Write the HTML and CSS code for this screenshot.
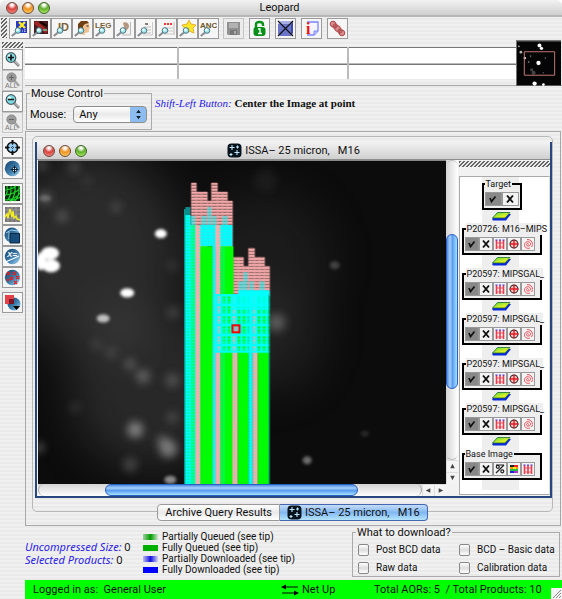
FILE: index.html
```html
<!DOCTYPE html>
<html lang="en">
<head>
<meta charset="utf-8">
<title>Leopard</title>
<link rel="stylesheet" href="styles.css">
</head>
<body>
<svg class="defs" aria-hidden="true">
  <defs>
    <linearGradient id="ball" x1="0" y1="0" x2="1" y2="1"><stop offset="0" stop-color="#123f66"/><stop offset=".55" stop-color="#3f7fae"/><stop offset="1" stop-color="#a9dcf5"/></linearGradient>
    <linearGradient id="tile" x1="0" y1="0" x2="1" y2="1"><stop offset="0" stop-color="#3fd83a"/><stop offset=".6" stop-color="#d6f02a"/><stop offset="1" stop-color="#ffe800"/></linearGradient>
    <filter id="blip"><feGaussianBlur stdDeviation=".6"/></filter>
    <filter id="soft" x="-50%" y="-50%" width="200%" height="200%"><feGaussianBlur stdDeviation="1.7"/></filter>
    <filter id="softer" x="-80%" y="-80%" width="260%" height="260%"><feGaussianBlur stdDeviation="4"/></filter>
    <filter id="haze" x="-80%" y="-80%" width="260%" height="260%"><feGaussianBlur stdDeviation="24"/></filter>
  </defs>
  <symbol id="lens" viewBox="0 0 17 17"><path d="M.8 16 5 12.500" stroke="#8b8f94" stroke-width="2.200"/><circle cx="7" cy="10.500" r="2.800" fill="#9feaf0" stroke="#4a7482" stroke-width="1"/><circle cx="6.500" cy="9.800" r="1.200" fill="#fff"/></symbol>
  <symbol id="zoomglass" viewBox="0 0 17 17"><path d="m10 10 5 5" stroke="#888" stroke-width="2.6"/><path d="m10.5 10 4.5 4.5" stroke="#ccc"/><circle cx="7" cy="6.5" r="4.8" fill="#7fdce4" stroke="#4a5a60" stroke-width="1.2"/><circle cx="5.5" cy="5" r="1.6" fill="#dffafa"/></symbol>
  <symbol id="greyglass" viewBox="0 0 17 17"><path d="m10 8 5 6" stroke="#a4a4a4" stroke-width="2.6"/><circle cx="7.5" cy="5.5" r="4.6" fill="#9a9a9a" stroke="#868686"/></symbol>
  <symbol id="layer" viewBox="0 0 21 9"><path d="M1 7 6 2h14l-5 6.5H2z" fill="#0a28e0"/><path d="M1.500 6 6.500 .5h12.500l-5 5.500z" fill="url(#tile)" stroke="#1b6a30" stroke-width=".8"/></symbol>
  <symbol id="check" viewBox="0 0 12 12"><path d="M3 5 4.500 8.500 8.500 3.500" fill="none" stroke="#111" stroke-width="1.700"/></symbol>
  <symbol id="cross" viewBox="0 0 12 12"><path d="m3 2.500 6 7m0-7-6 7" stroke="#111" stroke-width="1.9"/></symbol>
  <symbol id="grid" viewBox="0 0 12 12"><path d="M2.500 2v9M6 2v9M9.500 2v9" stroke="#f03a4a" stroke-width="1.600"/><path d="M2 5h8M2 9h8" stroke="#f03a4a" stroke-width=".8"/><path d="M1.500 2h9" stroke="#3a3aff" stroke-width="1.200" stroke-dasharray="2 1.500"/></symbol>
  <symbol id="target" viewBox="0 0 12 12"><circle cx="6" cy="6" r="3.900" fill="#ffc4c4" stroke="#333" stroke-width="1.100"/><path d="M6 1.500v9M1.500 6h9" stroke="#e01b24" stroke-width="1.400"/></symbol>
  <symbol id="spiral" viewBox="0 0 12 12"><g fill="none" stroke="#f04a55"><path d="M6.500 6.500C6.500 5 4.500 5.200 4.500 6.600 4.500 8.800 8.500 8.500 8.500 6 8.500 3 3 2.800 2.500 6.500 2.200 10 6 11 8 10"/><path d="M10.500 6.500C10.500 3 8 1.300 5 1.600M9.500 9l1-2"/></g></symbol>
  <symbol id="percent" viewBox="0 0 12 12"><g fill="none" stroke="#222" stroke-width="1.200"><circle cx="3.800" cy="3.800" r="1.500"/><circle cx="8.300" cy="8.300" r="1.500"/><path d="M10 2 2 10M2 2l8 0"/></g></symbol>
  <symbol id="palette" viewBox="0 0 12 12"><path fill="#222" d="M2 2h4v2H2z"/><path fill="#e22" d="M6 2h4v2H6z"/><path fill="#f90" d="M2 4h8v2H2z"/><path fill="#ee2" d="M5 4h3v2H5z"/><path fill="#2b4" d="M2 6h8v2H2z"/><path fill="#22d" d="M2 8h4v2H2z"/><path fill="#a3c" d="M6 8h4v2H6z"/></symbol>
  <symbol id="starfield" viewBox="0 0 15 15"><rect x=".5" y=".5" width="14" height="14" rx="4" fill="#07131c"/><path d="M5 2v5M2.500 4.500h5M10 7v5M7.500 9.500h5M10.500 2.500v3M9 4h3M4 10v3M2.500 11.500h3" stroke="#bfeaff" stroke-width="1.100"/></symbol>
</svg>

<div class="app">
  <header class="titlebar">
    <div class="lights"><button class="light red" aria-label="Close"></button><button class="light amber" aria-label="Minimize"></button><button class="light green" aria-label="Zoom"></button></div>
    <h1>Leopard</h1>
  </header>

  <div class="toolbar">
    <span class="grip tall"></span>
    <div class="tools">
      <button class="tool" aria-label="Find position"><svg viewBox="0 0 17 17"><path fill="#2b39c8" d="M5 1h11v12H5z"/><path d="m8 2 6 6m0-6L8 8" stroke="#ffee20" stroke-width="2.300"/><path d="M9 11h6M14 9v4" stroke="#ddd" stroke-dasharray="1 1"/><use href="#lens"/></svg></button>
      <button class="tool" aria-label="Find by spacecraft"><svg viewBox="0 0 17 17"><path fill="#451a20" d="M2 1h14v13H2z"/><path d="m3 2 12 10" stroke="#a02525" stroke-width="4"/><path d="m8 2 7 4" stroke="#100" stroke-width="2"/><path d="M11 10h4" stroke="#70a080" stroke-width="2"/><use href="#lens"/></svg></button>
      <button class="tool" aria-label="Find by ID"><svg viewBox="0 0 17 17"><text class="glyph" x="5" y="11" font-size="11" fill="#7b6138">ID</text><use href="#lens"/></svg></button>
      <button class="tool" aria-label="Find by observer"><svg viewBox="0 0 17 17"><path d="M5 14V4l3-3h5l2 3 1 4-1 1v3l-4 1v2z" fill="#efc090"/><path d="M4 9V4l3-3h6l2 2-4 1-2 2v3l-2 2z" fill="#6e3e14"/><path d="M12.500 6h2" stroke="#222"/><use href="#lens"/></svg></button>
      <button class="tool" aria-label="Find by legacy program"><svg viewBox="0 0 17 17"><text class="glyph" x="0" y="8" font-size="8" fill="#7b6138">LEG</text><use href="#lens"/></svg></button>
      <button class="tool" aria-label="Find by program"><svg viewBox="0 0 17 17"><path d="M5 1h9v14H5z" fill="#f6f2ee"/><path d="M14.500 2v13H6" fill="none" stroke="#bbb"/><path d="M7 3c2-2 6 0 6 3s-3 5-4 4z" fill="#b49782"/><use href="#lens"/></svg></button>
      <button class="tool" aria-label="Find by abstract"><svg viewBox="0 0 17 17"><path d="M5 1h10v14H5z" fill="#faf8f4"/><path d="M7 7h7M7 10h7M7 13h7" stroke="#bbb"/><path d="M8 4h3" stroke="#555" stroke-width="1.500"/><path d="M15.500 2v13H6" fill="none" stroke="#ccc"/><use href="#lens"/></svg></button>
      <button class="tool" aria-label="Find by campaign"><svg viewBox="0 0 17 17"><path d="M4 1h12v14H4z" fill="#f9f5f3"/><path d="M6 4h9" stroke="#e33" stroke-width="2" stroke-dasharray="2 1"/><path d="M6 8h9M6 11h9M6 14h9" stroke="#ccc"/><path d="M16 2v13" stroke="#bbb"/><use href="#lens"/></svg></button>
      <button class="tool" aria-label="Find by target"><svg viewBox="0 0 17 17"><path d="m10 0 2 4 5 1-3 3 1 5-5-2-4 2V9L3 5l5-1z" fill="#ffe52a" stroke="#e2a21d" stroke-width=".8"/><use href="#lens"/></svg></button>
      <button class="tool" aria-label="Find ancillary data"><svg viewBox="0 0 17 17"><text class="glyph" x="0" y="8" font-size="8" fill="#6f5428">ANC</text><use href="#lens"/></svg></button>
    </div>
    <div class="tools singles">
      <button class="tool off" aria-label="Save" disabled><svg viewBox="0 0 17 17"><path fill="#909090" d="M2 2h13v13H3l-1-1z"/><path fill="#b2b2b2" d="M4 3h9v5H4z"/><path fill="#777" d="M5 10h7v5H5z"/><path fill="#aaa" d="M9 11h2v3H9z"/></svg></button>
      <button class="tool" aria-label="Unlock"><svg viewBox="0 0 17 17"><path d="M5 9V4.500Q5 2 8.500 2T12 4.500V6" fill="none" stroke="#079018" stroke-width="2.400"/><rect x="2.500" y="7" width="12" height="9" rx="3" fill="#079018"/><path d="M7 9h2v4M7 13.500h4" fill="none" stroke="#fff" stroke-width="1.300"/></svg></button>
      <button class="tool" aria-label="Clear"><svg viewBox="0 0 17 17"><path fill="#6a75c8" d="M1 4h13v12H3l-2-2z"/><path fill="#a9b0e8" d="m1 4 2-3h13l-2 3z"/><path fill="#3f49a0" d="m14 4 2-3v12l-2 3z"/><path d="m1 1 15 15M16 1 1 16" stroke="#111" stroke-width="1.200"/></svg></button>
      <button class="tool" aria-label="Information"><svg viewBox="0 0 17 17"><path d="M4 2h11v9l-4 4H4" fill="#f5f5ff" stroke="#7a85ff" stroke-width="1.300"/><path d="M11 15v-4h4" fill="#bcc4ff" stroke="#7a85ff"/><text class="serif" x="3" y="14" font-size="16" fill="#f00f0f">i</text></svg></button>
      <button class="tool" aria-label="Links"><svg viewBox="0 0 17 17"><path d="m4 4 9 9" stroke="#d98d8d" stroke-width="6" stroke-linecap="round"/><g fill="none" stroke="#ad4a4a"><circle cx="4" cy="4" r="2.800"/><circle cx="8.500" cy="8.500" r="2.800"/><circle cx="13" cy="13" r="2.800"/><circle cx="6" cy="6" r="2"/><circle cx="11" cy="11" r="2"/></g></svg></button>
    </div>
  </div>

  <div class="workspace">
    <nav class="sidebar">
      <span class="grip wide"></span>
      <div class="stack">
        <button class="tool" aria-label="Zoom in"><svg viewBox="0 0 17 17"><use href="#zoomglass"/><path d="M4 6.500h6M7 3.500v6" stroke="#111" stroke-width="1.700"/></svg></button>
        <button class="tool off" aria-label="Zoom in all" disabled><svg viewBox="0 0 17 17"><use href="#greyglass"/><path d="M5 5.500h5M7.500 3v5" stroke="#666"/><text class="all" x="1" y="16">ALL</text></svg></button>
        <button class="tool" aria-label="Zoom out"><svg viewBox="0 0 17 17"><use href="#zoomglass"/><path d="M4 6.500h6" stroke="#111" stroke-width="1.700"/></svg></button>
        <button class="tool off" aria-label="Zoom out all" disabled><svg viewBox="0 0 17 17"><use href="#greyglass"/><path d="M5 5.500h5" stroke="#666"/><text class="all" x="1" y="16">ALL</text></svg></button>
      </div>
      <div class="stack">
        <button class="tool" aria-label="Center"><svg viewBox="0 0 17 17"><circle cx="8.500" cy="8.500" r="5.300" fill="#98cdf0" stroke="#111" stroke-width="1.500"/><path d="M8.500 1v4M8.500 12v4M1 8.500h4M12 8.500h4" stroke="#111" stroke-width="2"/><path d="M8.500 5v7M5 8.500h7" stroke="#223" stroke-width=".8" stroke-dasharray="1 1"/></svg></button>
        <button class="tool" aria-label="Center on target"><svg viewBox="0 0 17 17"><circle cx="8.500" cy="8.500" r="7.700" fill="url(#ball)"/><circle cx="10.500" cy="9.500" r="2.500" fill="#cfeaff" stroke="#123"/><path d="M10.500 5.500v8M6.500 9.500h8" stroke="#123"/></svg></button>
      </div>
      <div class="stack">
        <button class="tool" aria-label="Coordinate grid"><svg viewBox="0 0 17 17"><path fill="#0b2b10" d="M1 1h15v15H1z"/><path d="M1 5q8-1 11-4M1 10Q12 9 16 3M1 15Q13 14 16 8M5 16q9-2 11-4M3 1q1 8-2 10M7 1q1 9-4 15M11 1q1 9-4 15M15 1q1 9-4 15" fill="none" stroke="#1fcf2a" stroke-width="1.200"/></svg></button>
        <button class="tool" aria-label="Plot"><svg viewBox="0 0 17 17"><path fill="#777" d="M1 1h15v15H1z"/><path d="M4 1v15M8 1v15M12 1v15M1 4h15M1 8h15M1 12h15" stroke="#aaa" stroke-width=".7"/><path d="m1 11 2-3 1 4 2-9 2 8 1-6 1 7 2-2 1 3 3 1" fill="none" stroke="#f4ef1d" stroke-width="1.400"/></svg></button>
        <button class="tool" aria-label="Select area"><svg viewBox="0 0 17 17"><circle cx="8" cy="8" r="7.500" fill="url(#ball)"/><path d="M2 6 7 3l7 1M5 5v7" stroke="#9ed2f0" fill="none"/><path d="M6 6.500h9.500V16H6z" fill="#174d7a" stroke="#0a2740"/></svg></button>
        <button class="tool" aria-label="Formula"><svg viewBox="0 0 17 17"><circle cx="8.500" cy="8.500" r="7.700" fill="url(#ball)"/><text class="formula" x="3" y="9">X=</text><path d="M1.500 14 15 8" stroke="#fff" stroke-width="1.300"/></svg></button>
        <button class="tool" aria-label="Catalog marks"><svg viewBox="0 0 17 17"><circle cx="8.500" cy="8.500" r="7.700" fill="url(#ball)"/><path d="m3 3 3 3m0-3L3 6M9 3l3 3m0-3L9 6M6 8l3 3m0-3-3 3M12 7l3 3m0-3-3 3M10 12l3 3m0-3-3 3M3 10l2 2m0-2-2 2" stroke="#e02020" stroke-width="1.200"/></svg></button>
      </div>
      <div class="stack">
        <button class="tool" aria-label="Layers"><svg viewBox="0 0 17 17"><circle cx="10" cy="10" r="6.500" fill="url(#ball)"/><path d="M1 1h9v9H1z" fill="#e2414a"/><path d="M5 5h5v5H5z" fill="#7b1528"/><path d="M9 12h7l-3.500 4z" fill="#000"/></svg></button>
      </div>
    </nav>

    <main class="main">
      <section class="readout">
        <div class="cells"><span></span><span></span><span></span><span></span><span></span><span></span></div>
        <svg class="overview" viewBox="0 0 46 46" role="img" aria-label="Image overview">
          <path fill="#050505" d="M0 0h46v46H0z"/><path d="M.5 46V.5H46" fill="none" stroke="#777"/>
          <g fill="#fff" filter="url(#blip)"><circle cx="24" cy="5" r="2"/><circle cx="26" cy="8" r="1.700"/><circle cx="23" cy="23" r="2.200"/><circle cx="19" cy="44" r="2.200"/><circle cx="28" cy="45" r="1.400"/><circle cx="5" cy="12" r="1.400" opacity=".7"/><circle cx="9" cy="18" r="1.200"/><circle cx="3" cy="6" r="1" opacity=".6"/><circle cx="13" cy="22" r=".8" opacity=".6"/><circle cx="16" cy="30" r="1.600" opacity=".25"/><circle cx="18" cy="33" r="2" opacity=".25"/><circle cx="30" cy="18" r=".8" opacity=".4"/><circle cx="15" cy="16" r=".8" opacity=".4"/><circle cx="28" cy="33" r=".8" opacity=".3"/></g>
          <path d="M8.500 11.500h31v24h-31z" fill="none" stroke="#c67878"/>
        </svg>
      </section>

      <section class="controls">
        <fieldset class="mouse"><legend>Mouse Control</legend>
          <label for="mouse">Mouse:</label>
          <span class="picker"><select id="mouse"><option>Any</option></select><svg viewBox="0 0 16 16" aria-hidden="true"><path d="m8 3 2.500 3.500h-5zM8 13l2.500-3.500h-5z" fill="#122"/></svg></span>
        </fieldset>
        <p class="hint"><em>Shift-Left Button:</em> <strong>Center the Image at point</strong></p>
      </section>

      <section class="desk">
        <div class="pane">
          <div class="window">
            <header class="wintitle">
              <div class="lights"><button class="light red" aria-label="Close image"></button><button class="light amber" aria-label="Minimize image"></button><button class="light green" aria-label="Zoom image"></button></div>
              <h2><svg class="ico15"><use href="#starfield"/></svg>ISSA– 25 micron, &nbsp; M16</h2>
            </header>
            <div class="winbody">
              <div class="viewer">
                <svg class="sky" viewBox="38 161 407 324" preserveAspectRatio="xMinYMin slice" role="img" aria-label="Sky image with observation overlay">
                  <defs>
                    <pattern id="rung" width="5" height="3" patternUnits="userSpaceOnUse"><path fill="#966a6a" d="M0 0h5v3H0z"/><path fill="#ffb0b0" d="M0 0h5v1.600H0z"/></pattern>
                    <pattern id="pinkfill" width="5" height="3" patternUnits="userSpaceOnUse"><path fill="#f2aeae" d="M0 0h5v3H0z"/><path fill="#8fd0b8" d="M3 0h2v1H3z"/></pattern>
                    <pattern id="aqua" width="5" height="3" patternUnits="userSpaceOnUse"><path fill="#0ff" d="M0 0h5v3H0z"/><path fill="#00e890" d="M1 1h3v1H1z"/></pattern>
                    <pattern id="mint" width="5" height="3" patternUnits="userSpaceOnUse"><path fill="#00ffb4" d="M0 0h5v3H0z"/><path fill="#00ff50" d="M1 1h3v1H1z"/></pattern>
                    <pattern id="leaf" width="4" height="3" patternUnits="userSpaceOnUse"><path fill="#0f0" d="M0 0h4v3H0z"/><path fill="#0ce52c" d="M2 1h1v1H2z"/></pattern>
                    <pattern id="cyanbar" width="5" height="3" patternUnits="userSpaceOnUse"><path fill="#0ff" d="M0 0h5v3H0z"/><path fill="#4ad4d8" d="M1 1h3v1H1z"/></pattern>
                    <pattern id="mesh" x="215" y="294" width="5" height="10" patternUnits="userSpaceOnUse"><path d="M0 0h5v2H0zM0 4h5v1H0zM0 7h5v1H0zM0 9h5v1H0zM0 0h2v10H0z" fill="#0ff"/></pattern>
                  </defs>
                  <path fill="#0c0c0c" d="M38 161h407v324H38z"/>
                  <g filter="url(#haze)" fill="#aaa"><ellipse cx="90" cy="250" rx="90" ry="100" opacity=".2"/><ellipse cx="150" cy="390" rx="80" ry="80" opacity=".18"/><ellipse cx="260" cy="260" rx="70" ry="70" opacity=".1"/><ellipse cx="270" cy="340" rx="50" ry="50" opacity=".12"/></g>
                  <g filter="url(#softer)" fill="#ccc">
                    <circle cx="74" cy="167" r="6" opacity=".2"/><circle cx="45" cy="198" r="7" opacity=".25"/><circle cx="62" cy="216" r="6" opacity=".25"/><circle cx="87" cy="181" r="5" opacity=".1"/><circle cx="116" cy="207" r="5" opacity=".2"/><circle cx="42" cy="165" r="5" opacity=".3"/><circle cx="130" cy="364" r="5" opacity=".35"/><circle cx="143" cy="376" r="7" opacity=".35"/><circle cx="135" cy="429" r="8" opacity=".55"/><circle cx="168" cy="448" r="9" opacity=".5"/><circle cx="162" cy="440" r="6" opacity=".3"/><circle cx="130" cy="464" r="7" opacity=".25"/><circle cx="172" cy="380" r="7" opacity=".25"/><circle cx="96" cy="344" r="5" opacity=".15"/><circle cx="111" cy="352" r="6" opacity=".15"/><circle cx="75" cy="407" r="5" opacity=".15"/><circle cx="276" cy="322" r="9" opacity=".32"/><circle cx="39" cy="447" r="5" opacity=".4"/><circle cx="172" cy="265" r="5" opacity=".15"/><circle cx="173" cy="312" r="6" opacity=".2"/><circle cx="265" cy="180" r="12" opacity=".06"/><circle cx="172" cy="417" r="6" opacity=".2"/>
                  </g>
                  <g filter="url(#soft)" fill="#fff">
                    <ellipse cx="160.500" cy="233.500" rx="6" ry="4.500"/><ellipse cx="50" cy="253" rx="9" ry="6.500"/><ellipse cx="51" cy="265.500" rx="9" ry="6.500"/><ellipse cx="41" cy="261" rx="5" ry="9"/><ellipse cx="127" cy="292.500" rx="7" ry="4.500"/><ellipse cx="103" cy="318" rx="6.500" ry="4" opacity=".7"/><ellipse cx="170" cy="479" rx="6" ry="4" opacity=".5"/><ellipse cx="306.500" cy="459.500" rx="4.500" ry="4" opacity=".4"/><ellipse cx="334" cy="265" rx="5" ry="4" opacity=".2"/><ellipse cx="45" cy="198" rx="6" ry="3" opacity=".2"/><ellipse cx="364" cy="433" rx="4" ry="3" opacity=".12"/>
                  </g>
                  <g fill="url(#rung)" stroke="#e8a0a0" stroke-width=".5"><path d="M191 183h5v60h-5zM196 192h5v60h-5zM201 192h6v60h-6zM207 201h4v40h-4zM211 183h6v60h-6zM217 192h5v60h-5zM222 192h5v60h-5zM227 201h5v50h-5z"/><path d="M233 257h5v40h-5zM238 257h5v40h-5zM243 266h5v30h-5zM248 248h6v48h-6zM254 257h5v40h-5zM259 257h5v40h-5zM264 266h5v30h-5z"/></g>
                  <g opacity=".5" fill="#0ff"><path d="M185 207h5v18h-5zM190 216h5v12h-5zM201 216h5v10h-5zM207 207h4v18h-4zM212 216h4v12h-4zM222 216h5v12h-5zM238 281h5v13h-5zM243 272h4v22h-4zM249 281h4v13h-4zM259 281h5v13h-5z"/></g>
                  <path fill="url(#aqua)" d="M185 215h5v270h-5z"/><path fill="url(#mint)" d="M190 225h5v260h-5z"/>
                  <path fill="url(#pinkfill)" d="M195 225h5v260h-5z"/>
                  <path fill="url(#cyanbar)" d="M200 225h32v21h-32zM212 225h3v260h-3z"/>
                  <path fill="url(#leaf)" d="M200 246h12v239h-12zM220 246h13v239h-13z"/>
                  <path fill="url(#pinkfill)" d="M215 225h5v260h-5z"/><path fill="#00ffa8" opacity=".7" d="M221 246h1v239h-1zM223 246h1v239h-1z"/>
                  <path fill="url(#leaf)" d="M237 294h11v191h-11zM257 294h12v191h-12z"/>
                  <path fill="url(#pinkfill)" d="M232 294h5v191h-5zM252 294h5v191h-5z"/><path fill="url(#aqua)" d="M248 294h4v191h-4z"/>
                  <path fill="#0ff" d="M238 290h31v4h-31zM215 294h54v2h-54zM215 350h54v2h-54z"/><path fill="url(#mesh)" d="M215 294h54v58h-54z"/>
                  <path fill="#0ff" opacity=".8" d="M232 294h37v16h-37z"/><path fill="#098" d="M268 294h1v191h-1zM184 209h1v276h-1z"/>
                  <path fill="#8cc0c0" stroke="#f00000" stroke-width="2" d="M232 325h7v7h-7z"/>
                </svg>
                <div class="bar vbar"><div class="track"><div class="thumb"></div></div><button class="arrow" aria-label="Scroll up"><svg viewBox="0 0 12 12"><path d="m6 3 2.500 5h-5z"/></svg></button><button class="arrow" aria-label="Scroll down"><svg viewBox="0 0 12 12"><path d="m6 8 2.500-5h-5z"/></svg></button></div>
                <div class="bar hbar"><div class="track"><div class="thumb"></div></div><button class="arrow" aria-label="Scroll left"><svg viewBox="0 0 12 12"><path d="m3 6 5-2.500v5z"/></svg></button><button class="arrow" aria-label="Scroll right"><svg viewBox="0 0 12 12"><path d="m9 6-5-2.500v5z"/></svg></button></div>
              </div>
              <aside class="layers">
                <span class="grip wide"></span>
                <div class="list">
                  <fieldset class="layer small"><legend>Target</legend><button class="on" aria-label="Show"><svg><use href="#check"/></svg></button><button aria-label="Remove"><svg><use href="#cross"/></svg></button></fieldset>
                  <svg class="sheet"><use href="#layer"/></svg>
                  <fieldset class="layer cut"><legend>P20726: M16–MIPS</legend><button class="on" aria-label="Show"><svg><use href="#check"/></svg></button><button aria-label="Remove"><svg><use href="#cross"/></svg></button><button aria-label="Grid"><svg><use href="#grid"/></svg></button><button aria-label="Center"><svg><use href="#target"/></svg></button><button aria-label="Spiral"><svg><use href="#spiral"/></svg></button></fieldset>
                  <svg class="sheet"><use href="#layer"/></svg>
                  <fieldset class="layer cut"><legend>P20597: MIPSGAL_</legend><button class="on" aria-label="Show"><svg><use href="#check"/></svg></button><button aria-label="Remove"><svg><use href="#cross"/></svg></button><button aria-label="Grid"><svg><use href="#grid"/></svg></button><button aria-label="Center"><svg><use href="#target"/></svg></button><button aria-label="Spiral"><svg><use href="#spiral"/></svg></button></fieldset>
                  <svg class="sheet"><use href="#layer"/></svg>
                  <fieldset class="layer cut"><legend>P20597: MIPSGAL_</legend><button class="on" aria-label="Show"><svg><use href="#check"/></svg></button><button aria-label="Remove"><svg><use href="#cross"/></svg></button><button aria-label="Grid"><svg><use href="#grid"/></svg></button><button aria-label="Center"><svg><use href="#target"/></svg></button><button aria-label="Spiral"><svg><use href="#spiral"/></svg></button></fieldset>
                  <svg class="sheet"><use href="#layer"/></svg>
                  <fieldset class="layer cut"><legend>P20597: MIPSGAL_</legend><button class="on" aria-label="Show"><svg><use href="#check"/></svg></button><button aria-label="Remove"><svg><use href="#cross"/></svg></button><button aria-label="Grid"><svg><use href="#grid"/></svg></button><button aria-label="Center"><svg><use href="#target"/></svg></button><button aria-label="Spiral"><svg><use href="#spiral"/></svg></button></fieldset>
                  <svg class="sheet"><use href="#layer"/></svg>
                  <fieldset class="layer cut"><legend>P20597: MIPSGAL_</legend><button class="on" aria-label="Show"><svg><use href="#check"/></svg></button><button aria-label="Remove"><svg><use href="#cross"/></svg></button><button aria-label="Grid"><svg><use href="#grid"/></svg></button><button aria-label="Center"><svg><use href="#target"/></svg></button><button aria-label="Spiral"><svg><use href="#spiral"/></svg></button></fieldset>
                  <svg class="sheet"><use href="#layer"/></svg>
                  <fieldset class="layer"><legend>Base Image</legend><button class="on" aria-label="Show"><svg><use href="#check"/></svg></button><button aria-label="Remove"><svg><use href="#cross"/></svg></button><button aria-label="Stretch"><svg><use href="#percent"/></svg></button><button aria-label="Colors"><svg><use href="#palette"/></svg></button><button aria-label="Grid"><svg><use href="#grid"/></svg></button></fieldset>
                </div>
              </aside>
            </div>
          </div>
        </div>
        <div class="tabs"><button class="tab">Archive Query Results</button><button class="tab active"><svg class="ico15"><use href="#starfield"/></svg>ISSA– 25 micron, &nbsp; M16</button></div>
      </section>

      <section class="summary">
        <div class="totals"><p><em>Uncompressed Size:</em> 0</p><p><em>Selected Products:</em> 0</p></div>
        <ul class="key">
          <li><i class="partial queued"></i>Partially Queued (see tip)</li>
          <li><i class="queued"></i>Fully Queued (see tip)</li>
          <li><i class="partial loaded"></i>Partially Downloaded (see tip)</li>
          <li><i class="loaded"></i>Fully Downloaded (see tip)</li>
        </ul>
        <fieldset class="download"><legend>What to download?</legend>
          <label><input type="checkbox">Post BCD data</label><label><input type="checkbox">BCD – Basic data</label>
          <label><input type="checkbox">Raw data</label><label><input type="checkbox">Calibration data</label>
        </fieldset>
      </section>

      <footer class="status">
        <span>Logged in as: &nbsp;General User</span>
        <span class="net"><svg viewBox="0 0 18 14" aria-hidden="true"><path d="M2 4h15M1 10h15" stroke="#000" stroke-width="1.200"/><path d="m0 4 5-2.500v5zM18 10l-5-2.500v5z"/></svg>Net Up</span>
        <span>Total AORs: 5 &nbsp;/ Total Products: 10</span>
        <svg class="resize" viewBox="0 0 11 11" aria-hidden="true"><path fill="#f4f4f4" d="M0 0h11v11H0z"/><path d="m2 10 8-8M5 10l5-5M8 10l2-2" stroke="#888"/></svg>
      </footer>
    </main>
  </div>
</div>
</body>
</html>
```

FILE: styles.css
```css
* { box-sizing: border-box; }

body {
  margin: 0;
  background: #fff;
  color: #111;
  font: 11px/13px Roboto, "Noto Sans", sans-serif;
}

h1, h2, p, ul { margin: 0; padding: 0; font: inherit; list-style: none; }
button { margin: 0; padding: 0; border: 0; background: none; color: inherit; font: inherit; }
fieldset { margin: 0; min-width: 0; }
svg { display: block; }
.defs { width: 0; height: 0; position: absolute; }

.app {
  display: flex;
  flex-direction: column;
  min-height: 100vh;
  overflow: hidden;
  border-radius: 6px 6px 0 0;
  background: repeating-linear-gradient(#f0f0f0 0 2px, #eaeaea 2px 4px);
}

/* Title bars */
.titlebar, .wintitle {
  display: grid;
  grid-template-columns: 1fr auto 1fr;
  align-items: center;
  background: linear-gradient(#f2f2f2, #cfcfcf);
}
.titlebar { height: 17px; padding: 0 9px 0 6px; border-bottom: 2px solid #b6b6b6; }
.wintitle { height: 18px; padding: 0 6px; border-bottom: 1px solid #8c8c8c; }
.lights { display: flex; gap: 4px; }
.light { width: 12px; height: 12px; border-radius: 50%; border: 1px solid #6b4a40; }
.red { background: radial-gradient(circle at 50% 20%, #fff 0 10%, #d8423c 45%, #ff9a94); }
.amber { background: radial-gradient(circle at 50% 20%, #fff 0 10%, #ef9220 45%, #ffe070); }
.green { background: radial-gradient(circle at 50% 20%, #fff 0 10%, #5fae28 45%, #c8ff80); border-color: #3c6428; }
h2 { display: flex; align-items: center; gap: 3px; }
.ico15 { width: 15px; height: 15px; }

/* Tool buttons */
.grip {
  flex: none;
  background: linear-gradient(135deg, #666 0 25%, #eaeaea 25% 50%, #666 50% 75%, #eaeaea 75%) 0 0 / 4px 4px;
}
.grip.tall { width: 6px; height: 20px; }
.grip.wide { display: block; height: 6px; }
.toolbar { display: flex; gap: 2px; height: 23px; padding: 1px 0 0 1px; }
.tools { display: flex; }
.singles { gap: 5px; padding-left: 2px; }
.tool {
  display: grid;
  place-items: center;
  width: 21px;
  height: 21px;
  border: 1px solid #9a9a9a;
  background: #f6f6f6;
}
.tool.off { border-color: #c4c4c4; background: #ececec; }
.tool svg { width: 17px; height: 17px; }
.glyph { font-family: "Liberation Sans Narrow", "Liberation Sans", sans-serif; font-weight: bold; }
.serif { font-family: "Liberation Serif", serif; font-weight: bold; }
.all { font: 7px "Liberation Sans", sans-serif; fill: #777; }
.formula { font: italic bold 8px "Liberation Sans", sans-serif; fill: #fff; }

.workspace { display: flex; flex: 1; }
.sidebar { flex: none; width: 25px; padding: 2px 2px 0; }
.stack { display: flex; flex-direction: column; margin-top: 4px; }
.grip + .stack { margin-top: 1px; }
.main { display: flex; flex: 1; flex-direction: column; min-width: 0; }

/* Pixel readouts */
.readout { display: flex; height: 46px; border-bottom: 1px solid #a8a8a8; }
.cells {
  display: grid;
  flex: 1;
  grid-template-columns: 153fr 168fr 168fr;
  gap: 1px 2px;
  height: 32px;
  margin-top: 7px;
  background: #bbb;
}
.cells span { background: #fff; border-top: 1px solid #777; }
.overview { width: 45px; height: 46px; margin-right: 1px; }

/* Mouse controls */
.controls { display: flex; gap: 3px; height: 45px; padding-top: 1px; }
.mouse {
  display: flex;
  align-items: center;
  gap: 7px;
  width: 126px;
  height: 43px;
  margin-left: 1px;
  padding: 0 4px 0 3px;
  border: 1px solid #aaa;
}
.mouse legend { padding: 0 1px; }
.picker { position: relative; flex: 1; }
.picker select {
  display: block;
  width: 100%;
  height: 17px;
  padding: 0 5px;
  appearance: none;
  border: 1px solid #8e8e8e;
  border-radius: 4px;
  background: linear-gradient(90deg, transparent calc(100% - 16px), #8cbcf0 0), linear-gradient(#fff, #e9e9e9 50%, #fff);
  color: inherit;
  font: inherit;
}
.picker svg { position: absolute; top: 1px; right: 1px; width: 15px; height: 15px; pointer-events: none; }
.hint { padding-top: 10px; font: 11px/13px "Liberation Serif", serif; }
.hint em, .totals em { color: #2a22e6; }

/* Image desk */
.desk {
  display: flex;
  flex: 1;
  flex-direction: column;
  margin-right: 1px;
  padding: 4px 7px 4px 6px;
  border: 1px solid #a8a8a8;
}
.pane {
  display: flex;
  flex: 1;
  padding: 5px 0 13px 2px;
  border: 1px solid #b8b8b8;
  border-radius: 5px;
}
.window {
  display: flex;
  flex: 1;
  flex-direction: column;
  min-width: 0;
  border: solid #27477f;
  border-width: 0 2px 2px;
  background: #f2f2f2;
}
.winbody { display: flex; flex: 1; gap: 1px; padding-left: 1px; }
.viewer {
  display: grid;
  flex: 1;
  grid-template: minmax(0, 1fr) 12px / minmax(0, 1fr) 12px;
  min-width: 0;
}
.sky { width: 100%; height: 0; min-height: 100%; border-top: 1px solid #888; }
.bar { display: flex; background: linear-gradient(#d4d4d4, #fff); }
.vbar { flex-direction: column; background: linear-gradient(90deg, #d4d4d4, #fff); }
.track { display: flex; flex: 1; }
.vbar .track { flex-direction: column; border-radius: 6px; border: solid #bbb; border-width: 1px 0; }
.hbar .track { border-radius: 6px; border: solid #aaa; border-width: 0 1px; }
.track::before { content: ""; flex: 67; }
.track::after { content: ""; flex: 63; }
.vbar .track::before { flex: 74; }
.vbar .track::after { flex: 71; }
.thumb {
  flex: 253;
  border: 1px solid #2a5fc4;
  border-radius: 6px;
  background: linear-gradient(#4b8ce6, #a8d0fb 30%, #5a9cf0 55%, #a6e2ff);
}
.vbar .thumb { flex: 155; background: linear-gradient(90deg, #4b8ce6, #a8d0fb 30%, #5a9cf0 55%, #a6e2ff); }
.arrow { width: 12px; height: 12px; background: #f4f4f4; border: solid #ddd; border-width: 1px 0 0 1px; }
.arrow svg { width: 11px; height: 11px; fill: #444; }

/* Layer list */
.layers { display: flex; flex: none; flex-direction: column; gap: 9px; width: 91px; padding: 1px 0; }
.list {
  display: flex;
  flex: 1;
  flex-direction: column;
  align-items: center;
  padding: 1px 6px 10px 0;
  border: 1px solid #aaa;
  border-right-color: #ddd;
  background: linear-gradient(#eee, #eee) 22px 0 / 37px calc(100% - 4px) no-repeat #fff;
}
.layer {
  display: flex;
  width: 80px;
  height: 32px;
  padding: 2px 1px 0;
  border: 2px solid #000;
  background: #eee;
}
.layer.small { width: 40px; }
.layer.small button { width: 17px; }
.layer legend { height: 12px; padding: 0 1px; font-size: 9px; line-height: 12px; white-space: nowrap; }
.layer.cut legend { width: 77px; margin-right: -4px; margin-left: 1px; background: #eee; }
.layer button {
  display: grid;
  flex: none;
  place-items: center;
  width: 14px;
  height: 14px;
  border: 1px solid #999;
  background: #f3f3f3;
}
.layer .on { background: #888; }
.layer svg { width: 12px; height: 12px; }
.sheet { flex: none; width: 21px; height: 13px; padding: 2px 0; }

/* Tabs */
.tabs { display: flex; justify-content: center; margin-top: -8px; }
.tab {
  display: flex;
  align-items: center;
  gap: 3px;
  height: 17px;
  padding: 0 7px;
  border: 1px solid #999;
  border-radius: 4px 0 0 4px;
  background: linear-gradient(#fff, #e9e9e9 50%, #fff);
}
.tab.active {
  border-color: #4468b0;
  border-left: 0;
  border-radius: 0 4px 4px 0;
  background: linear-gradient(#c4dcf8, #82b8f2 50%, #b4e4ff);
}

/* Summary */
.summary { display: flex; align-items: flex-start; height: 54px; }
.totals { width: 118px; padding-top: 14px; font-family: "Noto Sans", sans-serif; white-space: nowrap; }
.key { flex: 1; padding-top: 5px; font-size: 10px; line-height: 11px; white-space: nowrap; }
.key li { display: flex; align-items: center; gap: 4px; }
.key i { width: 15px; height: 6px; }
.key .queued { background: #00b000; }
.key .loaded { background: #0000ff; }
.key .partial.queued { background: linear-gradient(90deg, #9fcf9f, #009c00, #cfe4cf); }
.key .partial.loaded { background: linear-gradient(90deg, #bcbcf4, #1010e0, #d4d4f4); }
.download {
  display: grid;
  grid-template-columns: 101px auto;
  row-gap: 2px;
  width: 208px;
  height: 51px;
  margin-right: 2px;
  padding: 3px 0 0 5px;
  border: 1px solid #aaa;
  white-space: nowrap;
}
.download legend { margin-left: -2px; padding: 0 1px; }
.download label { display: flex; align-items: center; gap: 7px; height: 15px; font-size: 10px; }
.download input {
  width: 11px;
  height: 12px;
  margin: 0;
  appearance: none;
  border: 1px solid #888;
  border-radius: 2px;
  background: linear-gradient(#fff, #ddd 50%, #fff);
}

/* Status bar */
.status {
  display: grid;
  grid-template-columns: 248px 93px 1fr 11px;
  align-items: center;
  height: 19px;
  padding-left: 8px;
  background: #00ff00;
  white-space: nowrap;
}
.net { display: flex; align-items: center; gap: 3px; }
.net svg { width: 18px; height: 14px; }
.resize { width: 11px; height: 11px; align-self: end; }
```
